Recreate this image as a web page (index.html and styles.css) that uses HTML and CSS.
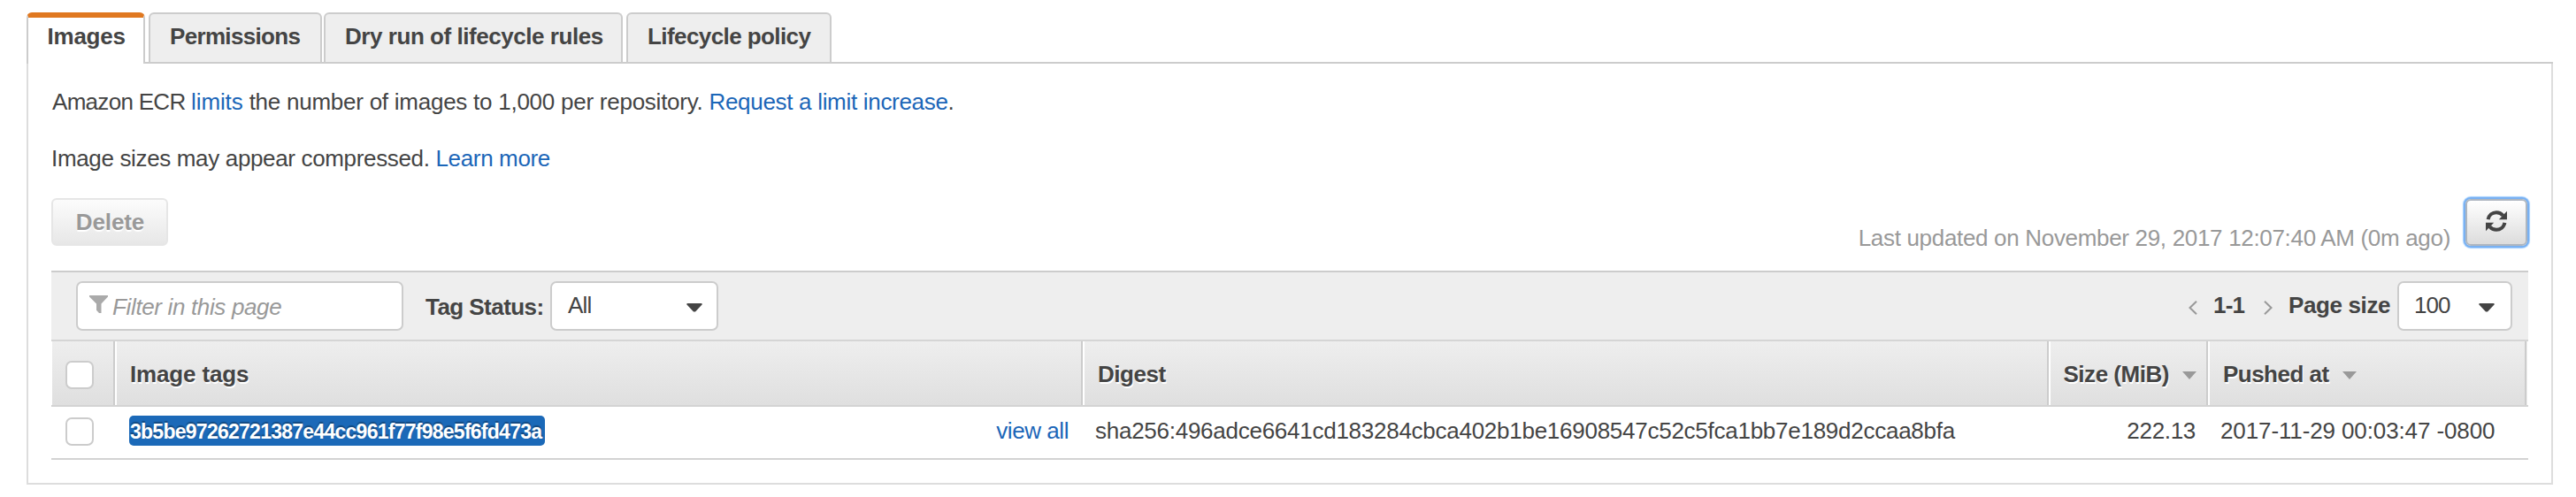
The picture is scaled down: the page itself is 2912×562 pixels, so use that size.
FILE: index.html
```html
<!DOCTYPE html>
<html lang="en">
<head>
<meta charset="utf-8">
<title>Repository images</title>
<link rel="stylesheet" href="styles.css">
</head>
<body>
<main class="repository">
  <nav class="tabs">
    <a class="tab tab-images active">Images</a>
    <a class="tab tab-permissions">Permissions</a>
    <a class="tab tab-dryrun">Dry run of lifecycle rules</a>
    <a class="tab tab-policy">Lifecycle policy</a>
  </nav>
  <section class="panel">
    <p class="note note-limits"><span class="product">Amazon ECR </span><a class="limits">limits</a> the number of images to 1,000 per repository. <a class="request">Request a limit increase</a>.</p>
    <p class="note note-sizes">Image sizes may appear compressed. <a>Learn more</a></p>
    <div class="actions">
      <button class="delete" disabled>Delete</button>
      <span class="updated">Last updated on November 29, 2017 12:07:40 AM (0m ago)</span>
      <button class="refresh" aria-label="Refresh">
        <svg class="refresh-icon" viewBox="0 0 24 24">
          <path class="arc" d="M2.6 10.2C3.5 5.4 7.5 2.2 12 2.2c3 0 5.6 1.2 7.6 3.6M21.4 13.8c-.9 4.8-4.9 8-9.4 8-3 0-5.600-1.200-7.600-3.600"/>
          <path class="head" d="M24 .8v9.400h-9.200zM0 23.200v-9.400h9.200z"/>
        </svg>
      </button>
    </div>
    <div class="filters">
      <div class="search">
        <svg class="funnel" viewBox="0 0 21 20"><path d="M0 0h21v1.500L13.500 9.500V20h-2.500L8 16.800V9.500L0 1.500z"/></svg>
        <span class="placeholder">Filter in this page</span>
      </div>
      <span class="status-label">Tag Status:</span>
      <div class="select select-status"><span class="all">All</span><svg class="caret" viewBox="0 0 18 10"><path d="M1 0h16l1 1-8 8.500H8L0 1z"/></svg></div>
      <div class="pager">
        <svg class="chevron" viewBox="0 0 10 16"><path d="M9 .8L1.500 8 9 15.200"/></svg>
        <span class="range">1-1</span>
        <svg class="chevron" viewBox="0 0 10 16"><path d="M1 .8L8.500 8 1 15.200"/></svg>
        <span class="size-label">Page size</span>
      </div>
      <div class="select select-size"><span class="hundred">100</span><svg class="caret" viewBox="0 0 18 10"><path d="M1 0h16l1 1-8 8.500H8L0 1z"/></svg></div>
    </div>
    <div class="row header">
      <div class="cell check"><span class="checkbox"></span></div>
      <div class="cell"><span class="h-tags">Image tags</span></div>
      <div class="cell"><span class="h-digest">Digest</span></div>
      <div class="cell"><span class="h-size">Size (MiB)</span><svg class="sort" viewBox="0 0 16 9"><path d="M0 0h16L8 9z"/></svg></div>
      <div class="cell"><span class="h-pushed">Pushed at</span><svg class="sort" viewBox="0 0 16 9"><path d="M0 0h16L8 9z"/></svg></div>
    </div>
    <div class="row data">
      <div class="check"><span class="checkbox"></span></div>
      <div class="tags"><span class="tag">3b5be97262721387e44cc961f77f98e5f6fd473a</span><a class="view-all">view all</a></div>
      <div class="digest">sha256:496adce6641cd183284cbca402b1be16908547c52c5fca1bb7e189d2ccaa8bfa</div>
      <div class="size">222.13</div>
      <div class="pushed">2017-11-29 00:03:47 -0800</div>
    </div>
  </section>
</main>
</body>
</html>
```
FILE: styles.css
```css
* { box-sizing: border-box; }
body {
  margin: 0;
  background: #fff;
  color: #444;
  font: 26px/30px "Liberation Sans", Arial, sans-serif;
  white-space: nowrap;
}
a { color: #1b66b8; }
svg { display: block; flex: none; }
.repository { width: 2856px; margin-left: 30px; padding-top: 14px; }

.tabs { display: flex; height: 58px; border-bottom: 2px solid #ccc; }
.tab {
  height: 56px;
  padding-top: 10px;
  border: 2px solid #ccc;
  border-bottom: 0;
  border-radius: 6px 6px 0 0;
  background: #eee;
  color: #444;
  font-weight: bold;
}
.tab.active {
  height: 58px;
  margin-right: 4px;
  padding-top: 6px;
  border-top: 6px solid #e07820;
  background: #fff;
}
.tab-images { width: 134px; padding-left: 21.5px; letter-spacing: -.23px; }
.tab-permissions { width: 196px; margin-right: 2px; padding-left: 22px; letter-spacing: -.67px; }
.tab-dryrun { width: 338px; margin-right: 4px; padding-left: 22px; letter-spacing: -.45px; }
.tab-policy { width: 232px; padding-left: 22px; letter-spacing: -.58px; }

.panel {
  height: 476px;
  padding: 28px 26px 0;
  border: 2px solid #ddd;
  border-top: 0;
}
.note { margin: 0 0 34px; }
.note-limits { padding-left: 1px; letter-spacing: -.25px; }
.product { letter-spacing: -.7px; }
.limits { letter-spacing: -.1px; }
.request { letter-spacing: -.307px; }
.note-sizes { letter-spacing: -.345px; margin-bottom: 30px; }

.actions { display: flex; height: 58px; margin-bottom: 24px; }
.delete {
  width: 132px;
  height: 54px;
  padding: 0 0 1px 1px;
  border: 2px solid #e6e6e6;
  border-radius: 6px;
  background: linear-gradient(#fcfcfc, #e7e7e7);
  color: #999;
  font: bold 26px/30px "Liberation Sans", Arial, sans-serif;
  letter-spacing: -.12px;
  text-shadow: 0 2px 1px #fff;
}
.updated { margin: 30px 17px 0 auto; color: #999; letter-spacing: -.32px; }
.refresh {
  display: flex;
  align-items: center;
  justify-content: center;
  width: 70px;
  height: 53px;
  margin: 1px 1px 0 0;
  padding: 0 0 3px;
  border: 2px solid #aeb6c0;
  border-radius: 6px;
  background: linear-gradient(#fff, #dcdcdc);
  box-shadow: 0 0 0 2px #79b1f2, 0 0 1px 3px #a3cfff;
}
.refresh-icon { width: 24px; height: 24px; }
.arc { fill: none; stroke: #444; stroke-width: 4; }
.head { fill: #444; }

.filters {
  display: flex;
  height: 80px;
  padding: 10px 18px 0 28px;
  border-top: 2px solid #ccc;
  border-bottom: 2px solid #d5d5d5;
  background: #eee;
}
.search, .select { display: flex; height: 56px; border: 2px solid #ccc; border-radius: 7px; background: #fff; }
.search { width: 370px; margin-right: 25px; padding: 12px 0 0 13px; }
.funnel { width: 21px; height: 20px; margin: 2px 5px 0 0; fill: #aaa; }
.placeholder { color: #999; font-style: italic; letter-spacing: -.351px; }
.status-label { width: 141px; padding-top: 14px; font-weight: bold; letter-spacing: -.55px; }
.select { padding-top: 10px; }
.select-status { width: 190px; padding-left: 18px; }
.select-size { width: 130px; padding-left: 17px; }
.caret { width: 18px; height: 10px; margin: 13px 18px 0 auto; fill: #444; }
.select-status .caret { margin-right: 16px; }
.all { letter-spacing: -.8px; }
.hundred { letter-spacing: -.96px; }
.pager { display: flex; margin-left: auto; padding-top: 12px; font-weight: bold; }
.chevron { width: 10px; height: 16px; margin-top: 10px; fill: none; stroke: #999; stroke-width: 2; }
.range { width: 57px; margin-left: 18px; letter-spacing: -.8px; }
.size-label { width: 123px; margin-left: 18px; letter-spacing: -.381px; }

.row { display: grid; grid-template-columns: 72px 1094px 1092px 180px 362px; }
.header {
  height: 74px;
  border-bottom: 2px solid #d3d3d3;
  font-weight: bold;
  text-shadow: 1px 2px 0 #fff;
}
.header .cell {
  display: flex;
  height: 72px;
  padding: 22px 0 0 15px;
  border-right: 2px solid #ccc;
  border-left: 2px solid #fff;
  background: linear-gradient(#eee, #dfdfdf);
}
.header .cell:last-child { width: 360px; box-shadow: 1px 0 #eee; }
.header .cell.check { border-left-width: 1px; }
.checkbox {
  display: block;
  width: 32px;
  height: 32px;
  border: 2px solid #ccc;
  border-radius: 7px;
  background: #fff;
}
.h-tags { letter-spacing: -.152px; }
.h-digest { letter-spacing: -.46px; }
.h-size { margin-left: -.5px; letter-spacing: -.48px; }
.h-pushed { letter-spacing: -.52px; }
.sort { width: 16px; height: 9px; margin: 12px 0 0 15.5px; fill: #999; }

.data { height: 60px; padding-top: 12px; border-bottom: 2px solid #d3d3d3; }
.data .check { padding-left: 16px; }
.tags { display: flex; justify-content: space-between; padding: 0 16px 0 16px; }
.tag {
  width: 470px;
  height: 34px;
  margin-top: -2px;
  padding: 3px 0 0 1px;
  border-radius: 5px;
  background: #1b69b8;
  color: #fff;
  font-weight: bold;
  font-size: 23px;
  letter-spacing: -.74px;
  text-shadow: 0 -2px 1px rgba(0, 0, 0, .3);
}
.view-all { letter-spacing: -.44px; }
.digest { padding-left: 14px; letter-spacing: -.26px; }
.size { padding-right: 14px; text-align: right; letter-spacing: -.313px; }
.pushed { padding-left: 14px; letter-spacing: -.115px; }
```
